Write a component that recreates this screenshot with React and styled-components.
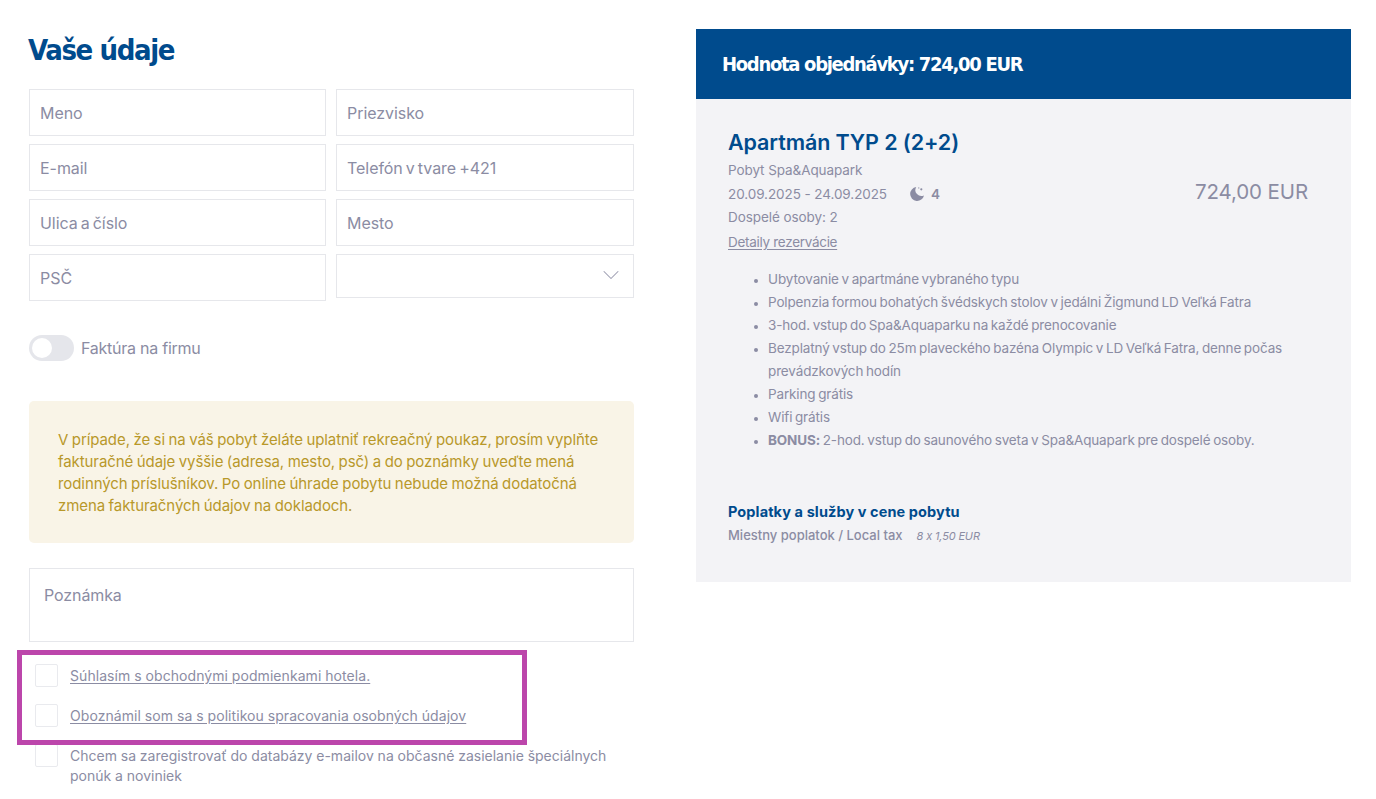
import React from 'react'
import styled, { createGlobalStyle } from 'styled-components'
import { ChevronDown } from 'lucide-react'

const GlobalStyle = createGlobalStyle`
  html, body { margin: 0; padding: 0; background: #fff; }
  body { font-family: "Inter", "Noto Sans", sans-serif; color: #8b8ca3; overflow: hidden; }
  * { box-sizing: border-box; }
`

const Page = styled.div`
  width: 1376px;
  height: 799px;
  overflow: hidden;
  display: flex;
  align-items: flex-start;
  padding: 29px 25px 0 29px;
  gap: 62px;
`

const Form = styled.div`
  width: 605px;
  flex: none;
  display: flex;
  flex-direction: column;
`

const Title = styled.h1`
  margin: 0 0 17px -1px;
  height: 43px;
  font-family: "DejaVu Sans Condensed", "DejaVu Sans", sans-serif;
  font-size: 29px;
  line-height: 43px;
  font-weight: 700;
  letter-spacing: -1.4px;
  color: #004b8d;
`

const Fields = styled.div`
  display: grid;
  grid-template-columns: 297px 298px;
  column-gap: 10px;
  grid-auto-rows: 47px;
  row-gap: 8px;
`

const Field = styled.div`
  height: 47px;
  border: 1px solid #e6e7eb;
  padding: 0 10px;
  display: flex;
  align-items: center;
  font-size: 16px;
  letter-spacing: -0.05px;
  word-spacing: -1.4px;
  color: #8b8ca3;
`

const SelectField = styled(Field)`
  height: 44px;
  justify-content: flex-end;
  padding-right: 8px;
`

const Toggle = styled.label`
  display: flex;
  align-items: center;
  gap: 7px;
  margin-top: 34px;
  height: 26px;
  font-size: 16px;
  letter-spacing: -0.25px;
`

const Track = styled.span`
  width: 45px;
  height: 26px;
  border-radius: 13px;
  background: #e5e6eb;
  padding: 3px;
  display: block;
`

const Knob = styled.span`
  display: block;
  width: 20px;
  height: 20px;
  border-radius: 50%;
  background: #fff;
`

const Notice = styled.div`
  margin-top: 40px;
  height: 142px;
  border-radius: 5px;
  background: #f9f4e7;
  color: #b8982a;
  padding: 28px 29px 0;
  font-size: 15px;
  line-height: 22px;
  letter-spacing: -0.08px;
  word-spacing: -0.6px;
`

const Note = styled.div`
  margin-top: 25px;
  height: 74px;
  border: 1px solid #e6e7eb;
  padding: 16px 14px;
  font-size: 16px;
  line-height: 20px;
  letter-spacing: -0.1px;
`

const Checks = styled.div`
  display: flex;
  flex-direction: column;
  margin-top: 8px;
  padding-top: 14px;
  position: relative;
`

const Highlight = styled.div`
  position: absolute;
  left: -12px;
  top: 0;
  width: 510px;
  height: 95px;
  border: 5px solid #bc46ab;
  pointer-events: none;
`

const CheckRow = styled.div`
  display: flex;
  align-items: flex-start;
  gap: 12px;
  padding-left: 6px;
  margin-bottom: ${p => p.$gap}px;
  font-size: 14px;
  line-height: 20px;
  word-spacing: -0.1px;
`

const Box = styled.span`
  flex: none;
  width: 23px;
  height: 23px;
  border: 1px solid #e9eaee;
  border-radius: 2px;
  background: #fff;
`

const CheckText = styled.span`
  margin-top: 2px;
  width: 550px;
  letter-spacing: ${p => p.$link ? '0.06px' : '0'};
  text-decoration: ${p => p.$link ? 'underline' : 'none'};
  text-underline-offset: 2px;
`

const Summary = styled.div`
  width: 655px;
  flex: none;
  background: #f3f3f6;
  height: 553px;
`

const SummaryHead = styled.div`
  height: 70px;
  background: #004b8d;
  color: #fff;
  display: flex;
  align-items: center;
  padding-left: 26px;
  font-family: "DejaVu Sans Condensed", "DejaVu Sans", sans-serif;
  font-size: 20px;
  font-weight: 700;
  letter-spacing: -1.3px;
`

const SummaryBody = styled.div`
  padding: 29px 43px 0 32px;
`

const RoomRow = styled.div`
  display: flex;
  justify-content: space-between;
  align-items: flex-start;
`

const RoomName = styled.h2`
  margin: 0 0 3px;
  font-size: 21.5px;
  line-height: 28px;
  font-weight: 600;
  letter-spacing: -0.1px;
  color: #004b8d;
`

const Meta = styled.div`
  display: flex;
  align-items: center;
  font-size: 13.5px;
  line-height: 23.5px;
  letter-spacing: -0.08px;
`

const Nights = styled.span`
  display: flex;
  align-items: center;
  gap: 6px;
  margin-left: 22px;
  font-weight: 600;
`

const DetailLink = styled.a`
  display: block;
  font-size: 13.5px;
  line-height: 24px;
  letter-spacing: -0.3px;
  text-decoration: underline;
  text-underline-offset: 2px;
  color: #8b8ca3;
`

const Price = styled.div`
  margin-top: 21px;
  font-size: 20.5px;
  line-height: 24px;
  letter-spacing: -0.1px;
`

const Perks = styled.ul`
  margin: 14px 0 0;
  padding: 0 0 0 40px;
  font-size: 13.5px;
  line-height: 23px;
  letter-spacing: -0.14px;
  word-spacing: -0.95px;
  li::marker { font-size: 11px; }
  strong { font-weight: 700; }
`

const FeesTitle = styled.div`
  margin-top: 48px;
  font-size: 14.5px;
  line-height: 24px;
  font-weight: 700;
  letter-spacing: 0.1px;
  color: #004b8d;
`

const FeeRow = styled.div`
  display: flex;
  align-items: baseline;
  gap: 14px;
  font-size: 13px;
  line-height: 22px;
  font-weight: 500;
`

const FeeAmount = styled.span`
  font-size: 11px;
  font-style: italic;
  font-weight: 400;
  letter-spacing: -0.15px;
`

const Chevron = styled(ChevronDown)`
  color: #9b9cb0;
  margin-top: -2px;
`

const fields = ['Meno', 'Priezvisko', 'E-mail', 'Telefón v tvare +421', 'Ulica a číslo', 'Mesto', 'PSČ']

const perks = [
  'Ubytovanie v apartmáne vybraného typu',
  'Polpenzia formou bohatých švédskych stolov v jedálni Žigmund LD Veľká Fatra',
  '3-hod. vstup do Spa&Aquaparku na každé prenocovanie',
  'Bezplatný vstup do 25m plaveckého bazéna Olympic v LD Veľká Fatra, denne počas prevádzkových hodín',
  'Parking grátis',
  'Wifi grátis',
]

const Moon = () => (
  <svg width="16" height="16" viewBox="0 0 16 16" fill="#8b8ca3">
    <path d="M7.2 1a7 7 0 1 0 7.8 8.4A6 6 0 0 1 7.2 1z" />
    <circle cx="12.3" cy="3.3" r="1.1" />
    <circle cx="9.8" cy="1.9" r=".6" />
  </svg>
)

const App = () => {
  return (
    <Page>
      <GlobalStyle />
      <Form>
        <Title>Vaše údaje</Title>
        <Fields>
          {fields.map(f => <Field key={f}>{f}</Field>)}
          <SelectField><Chevron size={28} strokeWidth={0.9} /></SelectField>
        </Fields>
        <Toggle><Track><Knob /></Track>Faktúra na firmu</Toggle>
        <Notice>
          V prípade, že si na váš pobyt želáte uplatniť rekreačný poukaz, prosím vyplňte
          fakturačné údaje vyššie (adresa, mesto, psč) a do poznámky uveďte mená
          rodinných príslušníkov. Po online úhrade pobytu nebude možná dodatočná
          zmena fakturačných údajov na dokladoch.
        </Notice>
        <Note>Poznámka</Note>
        <Checks>
          <Highlight />
          <CheckRow $gap={17}><Box /><CheckText $link>Súhlasím s obchodnými podmienkami hotela.</CheckText></CheckRow>
          <CheckRow $gap={17}><Box /><CheckText $link>Oboznámil som sa s politikou spracovania osobných údajov</CheckText></CheckRow>
          <CheckRow $gap={0}><Box /><CheckText>Chcem sa zaregistrovať do databázy e-mailov na občasné zasielanie špeciálnych ponúk a noviniek</CheckText></CheckRow>
        </Checks>
      </Form>
      <Summary>
        <SummaryHead>Hodnota objednávky: 724,00 EUR</SummaryHead>
        <SummaryBody>
          <RoomName>Apartmán TYP 2 (2+2)</RoomName>
          <RoomRow>
            <div>
              <Meta>Pobyt Spa&amp;Aquapark</Meta>
              <Meta>20.09.2025 - 24.09.2025<Nights><Moon />4</Nights></Meta>
              <Meta>Dospelé osoby: 2</Meta>
              <DetailLink>Detaily rezervácie</DetailLink>
            </div>
            <Price>724,00 EUR</Price>
          </RoomRow>
          <Perks>
            {perks.map(p => <li key={p}>{p}</li>)}
            <li><strong>BONUS:</strong> 2-hod. vstup do saunového sveta v Spa&amp;Aquapark pre dospelé osoby.</li>
          </Perks>
          <FeesTitle>Poplatky a služby v cene pobytu</FeesTitle>
          <FeeRow>Miestny poplatok / Local tax<FeeAmount>8 x 1,50 EUR</FeeAmount></FeeRow>
        </SummaryBody>
      </Summary>
    </Page>
  )
}

export default App
